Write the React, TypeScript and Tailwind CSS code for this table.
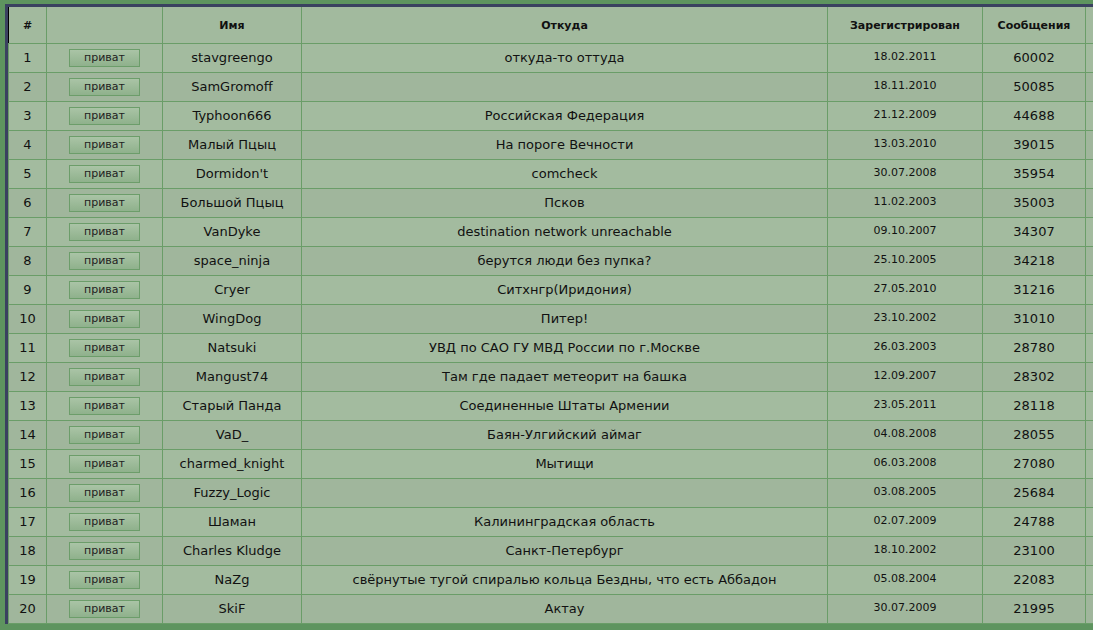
import React from "react";

type Member = {
  name: string;
  from: string;
  registered: string;
  posts: number;
};

const members: Member[] = [
  { name: "stavgreengo", from: "откуда-то оттуда", registered: "18.02.2011", posts: 60002 },
  { name: "SamGromoff", from: "", registered: "18.11.2010", posts: 50085 },
  { name: "Typhoon666", from: "Российская Федерация", registered: "21.12.2009", posts: 44688 },
  { name: "Малый Пцыц", from: "На пороге Вечности", registered: "13.03.2010", posts: 39015 },
  { name: "Dormidon't", from: "comcheck", registered: "30.07.2008", posts: 35954 },
  { name: "Большой Пцыц", from: "Псков", registered: "11.02.2003", posts: 35003 },
  { name: "VanDyke", from: "destination network unreachable", registered: "09.10.2007", posts: 34307 },
  { name: "space_ninja", from: "берутся люди без пупка?", registered: "25.10.2005", posts: 34218 },
  { name: "Cryer", from: "Ситхнгр(Иридония)", registered: "27.05.2010", posts: 31216 },
  { name: "WingDog", from: "Питер!", registered: "23.10.2002", posts: 31010 },
  { name: "Natsuki", from: "УВД по САО ГУ МВД России по г.Москве", registered: "26.03.2003", posts: 28780 },
  { name: "Mangust74", from: "Там где падает метеорит на башка", registered: "12.09.2007", posts: 28302 },
  { name: "Старый Панда", from: "Соединенные Штаты Армении", registered: "23.05.2011", posts: 28118 },
  { name: "VaD_", from: "Баян-Улгийский аймаг", registered: "04.08.2008", posts: 28055 },
  { name: "charmed_knight", from: "Мытищи", registered: "06.03.2008", posts: 27080 },
  { name: "Fuzzy_Logic", from: "", registered: "03.08.2005", posts: 25684 },
  { name: "Шаман", from: "Калининградская область", registered: "02.07.2009", posts: 24788 },
  { name: "Charles Kludge", from: "Санкт-Петербург", registered: "18.10.2002", posts: 23100 },
  { name: "NaZg", from: "свёрнутые тугой спиралью кольца Бездны, что есть Аббадон", registered: "05.08.2004", posts: 22083 },
  { name: "SkiF", from: "Актау", registered: "30.07.2009", posts: 21995 },
];

const cell = "border border-[#6a9d68] text-center align-middle p-0";

export default function App() {
  return (
    <div className="w-[1093px] h-[630px] overflow-hidden bg-[#5e945f] pt-[4px] pl-[5px] font-['DejaVu_Sans',sans-serif] text-[#111]">
      <div className="w-[1200px] border-t-[3px] border-l-[3px] border-[#3a4160]">
        <table className="table-fixed border-collapse bg-[#a2ba9e]">
          <colgroup>
            <col className="w-[38px]" />
            <col className="w-[116px]" />
            <col className="w-[139px]" />
            <col className="w-[526px]" />
            <col className="w-[155px]" />
            <col className="w-[103px]" />
            <col className="w-[110px]" />
          </colgroup>
          <thead>
            <tr className="h-[36px] text-[11px] font-bold">
              <th className={`${cell} border-l-black border-t-0 pt-[3px]`}>#</th>
              <th className={`${cell} border-t-0 pt-[3px]`}></th>
              <th className={`${cell} border-t-0 pt-[3px]`}>Имя</th>
              <th className={`${cell} border-t-0 pt-[3px]`}>Откуда</th>
              <th className={`${cell} border-t-0 pt-[3px]`}>Зарегистрирован</th>
              <th className={`${cell} border-t-0 pt-[3px]`}>Сообщения</th>
              <th className={`${cell} border-t-0 pt-[3px]`}></th>
            </tr>
          </thead>
          <tbody>
            {members.map((m, i) => (
              <tr
                key={m.name}
                className={i % 2 === 0 ? "h-[29px] bg-[#a3bb9f]" : "h-[29px] bg-[#a0b69c]"}
              >
                <td className={`${cell} text-[13px]`}>{i + 1}</td>
                <td className={cell}>
                  <div className="mx-auto flex h-[18px] w-[71px] items-center justify-center border border-[#6c9d6a] bg-gradient-to-b from-[#aac4a6] to-[#8fb18c] text-[11px] leading-none text-[#222]">
                    приват
                  </div>
                </td>
                <td className={`${cell} text-[13px]`}>{m.name}</td>
                <td className={`${cell} text-[13px]`}>{m.from}</td>
                <td className={`${cell} text-[11px]`}>{m.registered}</td>
                <td className={`${cell} text-[13px]`}>{m.posts}</td>
                <td className={cell}></td>
              </tr>
            ))}
          </tbody>
        </table>
      </div>
    </div>
  );
}
